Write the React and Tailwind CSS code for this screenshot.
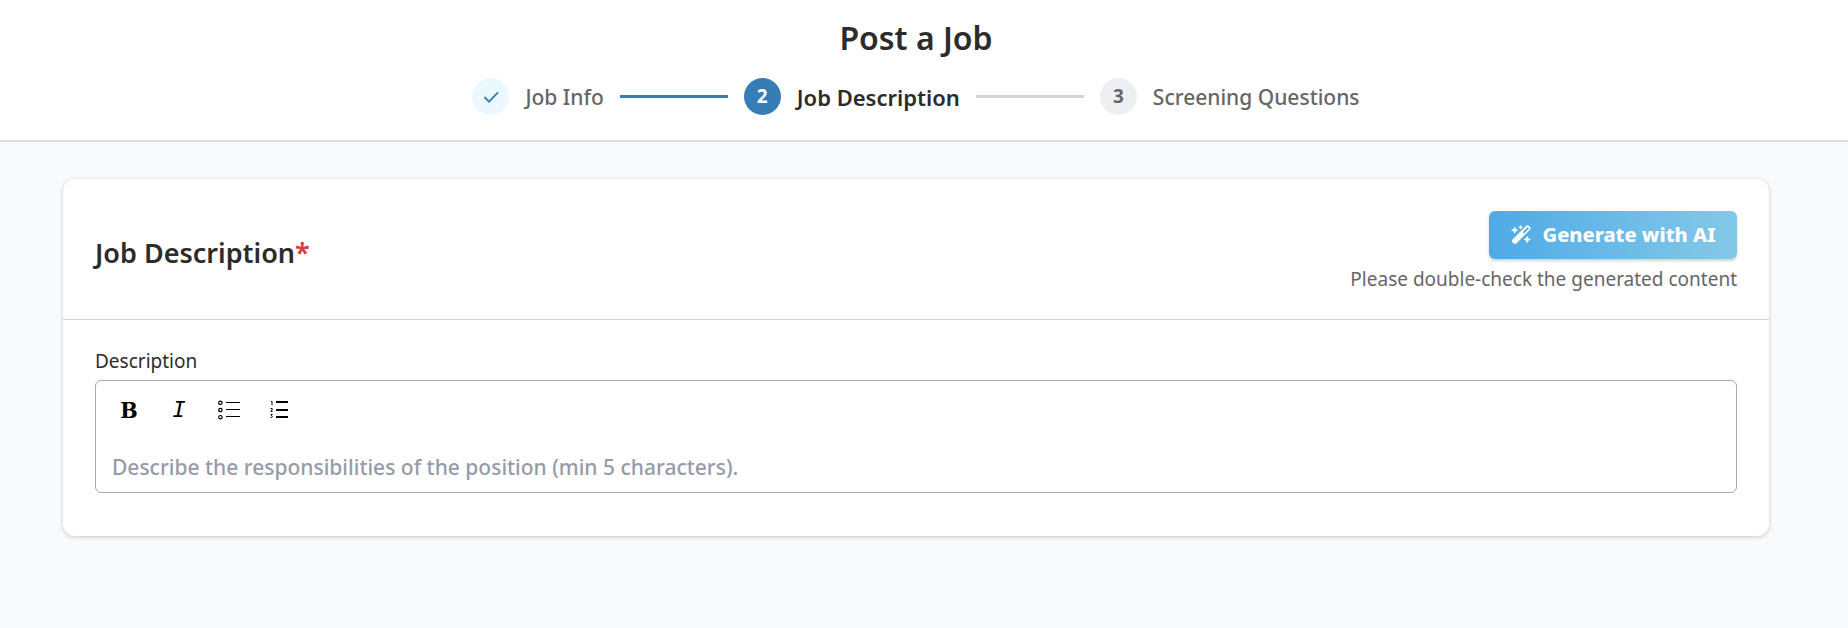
import React, { useState } from 'react';

const CheckIcon = () => (
  <svg className="w-5 h-5" viewBox="0 0 20 20" fill="none" stroke="currentColor" strokeWidth="1.8" aria-hidden="true">
    <path d="M3.4 10l4.6 4.6L17 5.4" />
  </svg>
);

const WandIcon = () => (
  <svg className="w-5 h-5" viewBox="0 0 20 20" fill="currentColor" aria-hidden="true">
    <path d="M3.7 1.4l1.3 2.5 2.4 1.2-2.4 1.2-1.3 2.5-1.3-2.5L0 5.1l2.4-1.2z" />
    <path d="M9.6 0l.9 1.4 1.4.8-1.4.8-.9 1.4-.9-1.4-1.4-.8 1.4-.8z" />
    <path d="M16.2 10.8l1.3 2.5 2.4 1.2-2.4 1.2-1.3 2.5-1.3-2.5-2.4-1.2 2.4-1.2z" />
    <path
      fillRule="evenodd"
      d="M15 .9a2.1 2.1 0 0 1 3 0l.9.9a2.1 2.1 0 0 1 0 3L5.5 18.3a2.1 2.1 0 0 1-3 0l-.9-.9a2.1 2.1 0 0 1 0-3zM16.6 2.1l-4.9 4.9 1.5 1.5 4.9-4.9z"
    />
  </svg>
);

const BulletListIcon = () => (
  <svg className="w-[22px] h-5" viewBox="0 0 22 20" fill="none" stroke="currentColor" strokeWidth="1.2" aria-hidden="true">
    <circle cx="2.4" cy="2.8" r="1.7" />
    <circle cx="2.4" cy="10" r="1.7" />
    <circle cx="2.4" cy="17.2" r="1.7" />
    <path d="M8 2.5h14M8 9.5h14M8 16.5h14" />
  </svg>
);

const NumberListIcon = () => (
  <svg className="w-[18px] h-5" viewBox="0 0 18 20" fill="none" stroke="currentColor" aria-hidden="true">
    <path strokeWidth="2" d="M6 2h12M6 10h12M6 17h12" />
    <path strokeWidth="1" d="M1 1.8l1-.5v3.9M.6 8.5h1.6v1.3L.9 11.5h1.6M.6 14.4h1.7l-1 1.3c1.5 0 1.3 2.2-.7 1.9" />
  </svg>
);

const steps = [
  { label: 'Job Info', status: 'done' },
  { label: 'Job Description', status: 'current' },
  { label: 'Screening Questions', status: 'todo' },
];

const circleStyles = {
  done: 'bg-[#ebf9ff] text-[#377db5]',
  current: 'bg-[#377db5] text-white',
  todo: 'bg-[#eeeff3] text-[#666666]',
};

const Stepper = () => (
  <ol className="flex items-center justify-center gap-4">
    {steps.map((step, index) => (
      <li key={step.label} className="flex items-center gap-4">
        {index > 0 && (
          <span className={`w-27 h-[3px] ${step.status === 'current' ? 'bg-[#377db5]' : 'bg-[#d2d3d8]'}`} />
        )}
        <span
          className={`flex items-center justify-center w-[37px] h-[37px] rounded-full text-[19px] font-bold ${circleStyles[step.status]}`}
        >
          {step.status === 'done' ? <CheckIcon /> : index + 1}
        </span>
        <span
          className={`leading-8 ${step.status === 'current' ? 'text-[22px] font-semibold text-[#2c2c2c]' : 'text-[21px] font-medium text-[#666666]'}`}
        >
          {step.label}
        </span>
      </li>
    ))}
  </ol>
);

const toolbarButton = 'flex items-center justify-center w-[50px] h-8 cursor-pointer';

const App = () => {
  const [description, setDescription] = useState('');

  return (
    <div className="min-h-screen bg-[#f9fafc] font-['Noto_Sans',sans-serif] text-[#2c2c2c]">
      <header className="bg-white border-b-2 border-[#dcdcde] pt-4 pb-[25px] pr-4">
        <h1 className="text-[32px] leading-11 font-semibold text-center mb-[18px]">Post a Job</h1>
        <Stepper />
      </header>

      <main className="pl-[63px] pr-[79px] pt-[37px]">
        <section className="bg-white rounded-xl shadow-[0_1px_4px_rgba(0,0,0,0.2)] pb-[43px]">
          <div className="flex items-center justify-between px-8 pt-8 pb-6 border-b border-[#d2d2d4]">
            <h2 className="text-[27px] leading-9 font-semibold">
              Job Description<span className="text-[#dc3a32]">*</span>
            </h2>
            <div className="flex flex-col items-end gap-1">
              <button
                type="button"
                className="flex items-center justify-center gap-3 w-62 h-12 rounded-md bg-linear-to-r from-[#4eaae6] to-[#84c9e8] text-white text-xl font-extrabold shadow-[0_2px_3px_rgba(0,0,0,0.18)] cursor-pointer"
              >
                <WandIcon />
                Generate with AI
              </button>
              <p className="text-[19px] leading-8 text-[#666666]">Please double-check the generated content</p>
            </div>
          </div>

          <div className="px-8 pt-7">
            <label htmlFor="description" className="block text-[19px] leading-[26px] mb-[6px]">
              Description
            </label>
            <div className="border border-[#a9a9ab] rounded-md">
              <div className="flex pt-[13px] pl-2 text-black">
                <button type="button" aria-label="Bold" className={toolbarButton}>
                  <span className="font-['DejaVu_Serif_Condensed','DejaVu_Serif',serif] font-bold text-[23px] leading-8">B</span>
                </button>
                <button type="button" aria-label="Italic" className={toolbarButton}>
                  <span className="font-['DejaVu_Sans_Mono',monospace] italic text-[22px] leading-8">I</span>
                </button>
                <button type="button" aria-label="Bulleted list" className={toolbarButton}>
                  <BulletListIcon />
                </button>
                <button type="button" aria-label="Numbered list" className={toolbarButton}>
                  <NumberListIcon />
                </button>
              </div>
              <textarea
                id="description"
                rows={1}
                value={description}
                onChange={(e) => setDescription(e.target.value)}
                placeholder="Describe the responsibilities of the position (min 5 characters)."
                className="block w-full px-4 pt-6 pb-2 text-[21px] leading-[34px] font-medium resize-none overflow-hidden outline-none placeholder:text-[#969ba8]"
              />
            </div>
          </div>
        </section>
      </main>
    </div>
  );
};

export default App;
